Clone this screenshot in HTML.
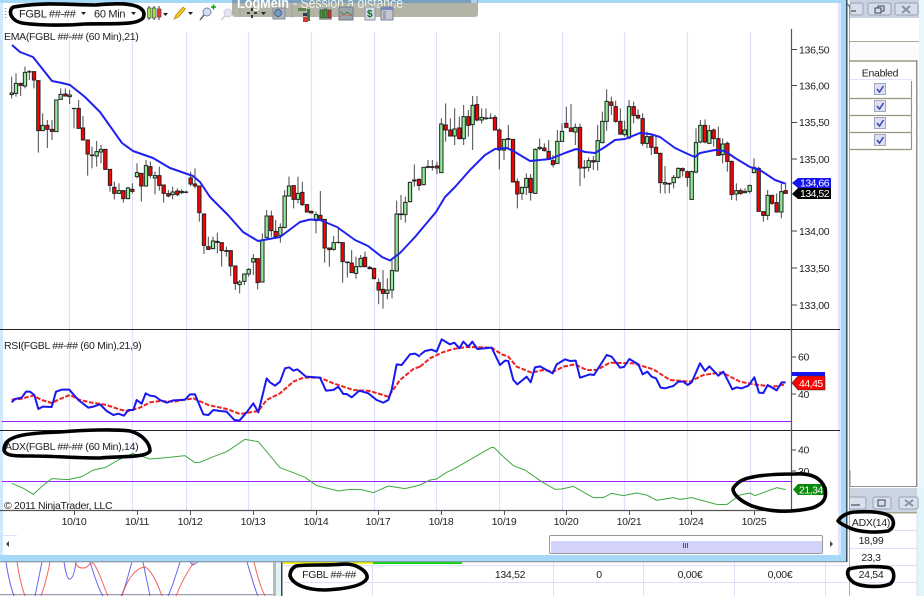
<!DOCTYPE html>
<html><head><meta charset="utf-8"><style>
html,body{margin:0;padding:0;background:#fff}
svg{display:block;filter:blur(.3px)}
text{font-family:"Liberation Sans",sans-serif;font-size:10.5px;letter-spacing:-.3px;fill:#222}
.m{text-anchor:middle}
.w{fill:none;stroke:#2a2a2a;stroke-width:3;opacity:.85}
.r{fill:#f00;stroke:#222;stroke-width:3}
.g{fill:#90ee98;stroke:#222;stroke-width:3}
.el{fill:none;stroke:#000;stroke-width:3.6;stroke-linejoin:round}
.mk{fill:#fff;letter-spacing:-.5px}
</style></head><body>
<svg width="924" height="596" viewBox="0 0 924 596" xmlns="http://www.w3.org/2000/svg">
<rect width="924" height="596" fill="#fff"/>

<!-- right upper window -->
<rect x="846" y="0" width="78" height="18" fill="#c9d3e0"/>
<g fill="#d5deea" stroke="#98a2b2">
<rect x="850" y="3" width="13" height="12" rx="2"/><rect x="868" y="3" width="23" height="12" rx="2"/><rect x="895" y="3" width="23" height="12" rx="2"/>
</g>
<path d="M851 11h5" stroke="#667" stroke-width="1.5"/>
<rect x="878" y="6" width="6" height="5" fill="none" stroke="#445"/><rect x="875" y="8" width="6" height="5" fill="#d5deea" stroke="#445"/>
<path d="M902 6l8 7M910 6l-8 7" stroke="#8a93a5" stroke-width="2"/>
<rect x="919" y="0" width="5" height="490" fill="#e6f8fb"/>
<rect x="848" y="41" width="71" height="1.5" fill="#a9a990"/>
<rect x="848" y="60" width="68" height="2" fill="#b5b5a5"/>
<rect x="848" y="42" width="71" height="18" fill="#fafcfe"/>
<rect x="916" y="60" width="1.5" height="427" fill="#8b8f98"/>
<rect x="850" y="79" width="62" height="1" fill="#dfe4fa"/>
<text class="m" x="880" y="76.500">Enabled</text>
<path d="M850 98.500h61M850 115.500h61M850 132.500h61M850 149.500h61M911.500 81V150" stroke="#97977f" stroke-width="1.200"/>
<g fill="#dde0ee" stroke="#a0a8bc">
<rect x="874.500" y="83.500" width="11" height="11"/><rect x="874.500" y="100.500" width="11" height="11"/><rect x="874.500" y="117.500" width="11" height="11"/><rect x="874.500" y="134.500" width="11" height="11"/>
</g>
<path d="M877 89l2.500 3 4-6M877 106l2.500 3 4-6M877 123l2.500 3 4-6M877 140l2.500 3 4-6" fill="none" stroke="#3345c0" stroke-width="1.500"/>
<path d="M850 486.500h67" stroke="#8b8f98"/>
<path d="M850 470V487" stroke="#8b8f98"/>

<!-- right lower window -->
<rect x="846" y="488" width="73" height="25" fill="#cbd5e2"/>
<rect x="917" y="488" width="7" height="108" fill="#e0f6fa"/>
<g fill="#d7e0ec" stroke="#98a2b2">
<rect x="847" y="497" width="19" height="12" rx="2"/><rect x="873" y="497" width="18" height="12" rx="2"/><rect x="899" y="497" width="19" height="12" rx="2"/>
</g>
<path d="M851 505h9" stroke="#667" stroke-width="1.500"/><rect x="878" y="500" width="7" height="6" fill="none" stroke="#445"/>
<path d="M905 500l8 6M913 500l-8 6" stroke="#8a93a5" stroke-width="2"/>
<rect x="846" y="512" width="71" height="1.500" fill="#a9a990"/>

<!-- bottom background table -->
<g stroke="#dedef8" fill="none">
<path d="M284 565.500H917M284 582.500H917M846 530.500H917M846 548.500H917M372.500 562V596M553.500 562V596M643.500 562V596M734.500 562V596M825.500 562V596M917 513V596"/>
</g>
<rect x="283" y="561" width="90" height="3" fill="#f4f400"/>
<rect x="373" y="561" width="89" height="3" fill="#00e000"/>
<text class="m" x="329" y="578">FGBL ##-##</text>
<text class="m" x="510" y="578">134,52</text>
<text class="m" x="599" y="578">0</text>
<text class="m" x="690" y="578">0,00€</text>
<text class="m" x="780" y="578">0,00€</text>
<text class="m" x="871" y="526">ADX(14)</text>
<text class="m" x="871" y="544">18,99</text>
<text class="m" x="871" y="561">23,3</text>
<text class="m" x="871" y="578">24,54</text>
<!-- bottom-left chart fragment -->
<rect x="0" y="594" width="273" height="1.200" fill="#9a9ab0"/>
<rect x="273" y="561" width="3" height="35" fill="#b5bcbc"/><rect x="276" y="561" width="5" height="35" fill="#dff5f5"/><rect x="281" y="561" width="1.500" height="35" fill="#444"/>
<g fill="none" stroke="#4a4af0" stroke-width="1" opacity=".85">
<path d="M6 562C8 575 11 588 14 596M42 562L35 596M64 562C66 575 68 580 70 579C73 578 75 570 76 562M90 562C94 575 99 590 103 596M132 562C128 575 125 590 121 596M143 562L150 596M180 562C176 575 172 588 168 596M198 562L193 565L190 562M247 562C251 575 255 590 258 596"/>
</g>
<g fill="none" stroke="#f04a4a" stroke-width="1" opacity=".85">
<path d="M17 562C19 575 22 588 25 596M50 562C48 572 44 588 41 596M75 562C78 568 80 568 84 568C88 568 90 562 93 563C98 568 103 585 108 596M122 596C127 580 135 568 145 567C152 570 158 585 162 596M176 596C182 580 190 568 194 562M254 562C257 575 261 588 265 596"/>
</g>

<!-- main window -->
<rect x="0" y="0" width="846" height="562" fill="#a6d8f8"/>
<rect x="2" y="3" width="836" height="552" fill="#fff"/>
<rect x="838" y="3" width="3" height="552" fill="#dfe6fa"/>
<rect x="846" y="0" width="1.500" height="562" fill="#3a4a5a"/>
<rect x="847.500" y="0" width="2" height="596" fill="#fff"/>
<rect x="0" y="561" width="846" height="1.300" fill="#8a9aa8"/>
<path d="M847 4c2 1 3 3 3 5" stroke="#556" fill="none"/>
<path d="M849.500 9V596" stroke="#556" stroke-width=".8" opacity=".6"/>
<rect x="0" y="3" width="3" height="552" fill="#cfe8fb"/>

<!-- grid -->
<path d="M69.500 32V510M132.500 32V510M186.500 32V510M248.500 32V510M311.500 32V510M374.500 32V510M436.500 32V510M499.500 32V510M562.500 32V510M624.500 32V510M687.500 32V510M750.500 32V510" stroke="#dfe0fb" stroke-width="1.200" fill="none"/>

<!-- toolbar -->
<path d="M5.500 8v1M5.500 11v1M5.500 14v1M5.500 17v1" stroke="#999" stroke-width="1.500"/>
<text x="19" y="17.500" style="font-size:11px">FGBL ##-##</text>
<path d="M81 12h5l-2.500 3z" fill="#222"/>
<text x="94" y="17.500" style="font-size:11px">60 Min</text>
<path d="M131 12h5l-2.500 3z" fill="#222"/>
<path d="M149 6V20M154 6V20M159 6V20" stroke="#333"/>
<rect x="147.500" y="8" width="3.500" height="10" fill="#9be34a" stroke="#444" stroke-width=".7"/>
<rect x="152.500" y="8" width="3.500" height="10" fill="#9be34a" stroke="#444" stroke-width=".7"/>
<rect x="157.500" y="9" width="3.500" height="8" fill="#e33" stroke="#444" stroke-width=".7"/>
<path d="M163 13h5l-2.500 3z" fill="#222"/>
<path d="M174 19l2-4 7-8 2.500 2-7 8z" fill="#f0c820" stroke="#a88a10" stroke-width=".7"/>
<path d="M188 12h5l-2.500 3z" fill="#222"/>
<circle cx="207" cy="12" r="4" fill="#cfe0f5" stroke="#7a8aa8"/><path d="M204 15l-4 5" stroke="#667" stroke-width="1.500"/>
<path d="M211 7h5M213.500 4.500v5" stroke="#0a0" stroke-width="1.500"/>
<circle cx="228" cy="13" r="4" fill="#e4e4f6" stroke="#c8c8de"/><path d="M225 16l-4 4" stroke="#ccc" stroke-width="1.500"/>

<!-- LogMeIn overlay -->
<rect x="232" y="0" width="246" height="17" rx="3" fill="#8f917c" opacity=".68"/>
<rect x="232" y="0" width="246" height="3" fill="#6f9fc4" opacity=".8"/>
<text x="237" y="8" textLength="52" lengthAdjust="spacingAndGlyphs" style="font-size:14.500px;letter-spacing:0;fill:#fff;font-weight:bold">LogMeIn</text>
<text x="293" y="8" textLength="110" lengthAdjust="spacingAndGlyphs" style="font-size:14.500px;letter-spacing:0;fill:#eef0e6">- Session à distance</text>
<rect x="471" y="0" width="6" height="3" fill="#b6cbe4"/>
<path d="M240 6V16M292 6V18" stroke="#99a" opacity=".6"/>
<path d="M252 8v3M252 15v3M247 13h3M254 13h3" stroke="#111" stroke-width="1.600"/>
<path d="M261 12h5l-2.500 3z" fill="#222"/>
<rect x="273" y="8" width="12" height="11" fill="#aab6c4" stroke="#889"/><circle cx="278" cy="13" r="3.500" fill="#6d9dc8" stroke="#567"/>
<g transform="translate(298 7)"><rect x="0" y="1" width="8" height="3" fill="#5a8a4a"/><rect x="5" y="6" width="7" height="3" fill="#335"/><rect x="9" y="2" width="3" height="12" fill="#3a7a3a"/><rect x="5" y="10" width="5" height="5" fill="#d33"/></g>
<g transform="translate(319 7)"><rect x="0" y="0" width="13" height="13" fill="#a8aeb0"/><rect x="1" y="3" width="3" height="8" fill="#4a9a3a" stroke="#333" stroke-width=".6"/><rect x="5" y="2" width="3" height="9" fill="#4a9a3a" stroke="#333" stroke-width=".6"/><rect x="9" y="3" width="3" height="8" fill="#c33" stroke="#333" stroke-width=".6"/></g>
<g transform="translate(339 7)"><rect x="0" y="0" width="14" height="13" fill="#9aa4ac" stroke="#778"/><path d="M1 5l4 3 3-3 5 4" stroke="#3a8a3a" fill="none"/><path d="M1 10l4-3 4 2 4-2" stroke="#c66" fill="none" stroke-width=".8"/></g>
<g transform="translate(365 7)"><rect x="0" y="0" width="10" height="13" fill="#d4dce6" stroke="#8892a4"/><text x="2" y="10" style="font-size:10px;fill:#0a6a2a;font-weight:bold;letter-spacing:0">$</text></g>
<g transform="translate(381 7)"><rect x="0" y="0" width="12" height="13" fill="#c4c8cc" stroke="#7a80a0"/><rect x="0" y="0" width="12" height="3" fill="#7a86b8"/><rect x="2" y="4" width="3" height="8" fill="#96a0c8"/></g>

<text x="4" y="40">EMA(FGBL ##-## (60 Min),21)</text>

<!-- panels -->
<path d="M0 329.500H840M0 430.500H840" stroke="#222" stroke-width="1"/>
<path d="M2 421.500H791M2 481.500H791" stroke="#9a20ff" stroke-width="1"/>
<path d="M791.500 29V510M0 510.500H791.500" stroke="#555" stroke-width="1.200" fill="none"/>
<path d="M791 49.500h6M791 85.500h6M791 122.500h6M791 159h6M791 231h6M791 268h6M791 305h6M791 357h5M791 394h5M791 450h5M791 471h5" stroke="#444"/>
<path d="M74.500 510v5M137.500 510v5M190.500 510v5M253.500 510v5M316.500 510v5M378.500 510v5M441.500 510v5M504.500 510v5M566.500 510v5M629.500 510v5M691.500 510v5M754.500 510v5" stroke="#555"/>
<g>
<text x="799" y="53.500">136,50</text><text x="799" y="89.500">136,00</text><text x="799" y="126">135,50</text><text x="799" y="163">135,00</text><text x="799" y="235">134,00</text><text x="799" y="272">133,50</text><text x="799" y="309">133,00</text>
<text x="798" y="360.500">60</text><text x="798" y="398">40</text><text x="798" y="453.500">40</text><text x="798" y="475">30</text>
</g>
<g class="dates">
<text class="m" x="74" y="525">10/10</text><text class="m" x="137" y="525">10/11</text><text class="m" x="190" y="525">10/12</text><text class="m" x="253" y="525">10/13</text><text class="m" x="316" y="525">10/14</text><text class="m" x="378" y="525">10/17</text><text class="m" x="441" y="525">10/18</text><text class="m" x="504" y="525">10/19</text><text class="m" x="566" y="525">10/20</text><text class="m" x="629" y="525">10/21</text><text class="m" x="691" y="525">10/24</text><text class="m" x="754" y="525">10/25</text>
</g>
<text x="4" y="349">RSI(FGBL ##-## (60 Min),21,9)</text>
<text x="5" y="450">ADX(FGBL ##-## (60 Min),14)</text>
<text x="4" y="509">© 2011 NinjaTrader, LLC</text>

<!-- candles 1 -->
<g transform="translate(0 60) scale(.33333)">
<path class="w" d="M35 50V115M48 40V110M62 68V108M75 20V85M88 30V60M102 35V85M115 62V278M128 160V212M142 180V264M156 180V240M169 120V215M182 85V120M196 85V110M209 90V132M222 145V205M236 120V205M249 168V240M263 240V347M276 260V325M290 243V320M303 255V310M316 268V330M330 328V395M343 365V418M357 370V402M370 390V428M384 380V418M397 370V400M411 310V355M424 340V425M438 300V380M451 305V355M465 335V403M478 320V392M491 375V428M505 390V412M518 380V418M532 385V408M545 388V402M558 392V400M572 335V378M585 325V385M598 378V485M612 460V582M625 530V570M639 530V568M652 518V580M665 548V620M679 560V590M692 572V648M706 618V690M719 660V700M733 640V675M746 625V650M760 582V645M773 596V688M787 520V666M800 450V535M814 452V530M827 480V535M841 490V548M854 390V505M867 350V410M881 375V445M894 350V430"/>
<path class="r" d="M57 70h10V76h-10zM97 35h10V60h-10zM110 62h10V212h-10zM137 196h10V208h-10zM151 208h10V214h-10zM191 102h10V108h-10zM231 145h10V205h-10zM244 204h10V240h-10zM258 240h10V282h-10zM311 268h10V328h-10zM325 328h10V376h-10zM338 382h10V400h-10zM365 392h10V416h-10zM392 388h10V394h-10zM419 340h10V378h-10zM446 320h10V346h-10zM473 347h10V376h-10zM486 375h10V400h-10zM500 401h10V408h-10zM527 393h10V404h-10zM567 354h10V372h-10zM580 372h10V378h-10zM593 378h10V458h-10zM607 462h10V556h-10zM620 560h10V568h-10zM647 544h10V547h-10zM660 548h10V572h-10zM687 572h10V618h-10zM701 618h10V670h-10zM768 596h10V668h-10zM809 468h10V512h-10zM822 514h10V530h-10zM876 377h10V418h-10z"/>
<path class="g" d="M30 99h10V104h-10zM43 70h10V100h-10zM70 37h10V78h-10zM83 35h10V36h-10zM123 196h10V212h-10zM164 120h10V215h-10zM177 103h10V118h-10zM204 105h10V110h-10zM217 145h10V146h-10zM271 285h10V287h-10zM285 275h10V288h-10zM298 268h10V276h-10zM352 392h10V400h-10zM379 384h10V416h-10zM406 338h10V350h-10zM433 317h10V378h-10zM460 347h10V354h-10zM513 396h10V404h-10zM540 394h10V398h-10zM553 396h10V397h-10zM634 543h10V566h-10zM674 572h10V574h-10zM714 666h10V674h-10zM728 642h10V664h-10zM741 628h10V642h-10zM755 596h10V606h-10zM782 540h10V666h-10zM795 468h10V532h-10zM836 502h10V526h-10zM849 408h10V502h-10zM862 378h10V408h-10zM889 400h10V418h-10z"/>
</g>
<!-- candles 2 -->
<g transform="translate(300 80) scale(.33333)">
<path class="w" d="M7 305V378M21 372V398M34 392V400M48 395V460M61 333V420M74 418V548M88 505V560M101 468V512M115 445V490M128 487V608M142 545V592M155 510V578M168 530V596M182 525V562M195 515V562M209 558V568M222 565V598M236 595V672M249 570V686M262 595V658M276 535V655M290 362V575M303 345V420M316 350V428M330 305V368M343 253V320M357 295V332M371 262V316M384 240V265M397 240V272M411 245V282M424 115V278M437 70V185M451 115V170M464 85V195M478 110V178M491 75V195M505 90V170M518 48V210M531 48V125M545 85V130M558 85V120M572 100V116M585 105V150M598 145V268M612 178V240M625 135V210M639 178V308M652 295V385M666 320V360M679 280V345M692 282V362M706 205V342M719 175V210M733 190V215M746 180V240"/>
<path class="r" d="M2 337h10V374h-10zM16 374h10V396h-10zM29 394h10V399h-10zM56 406h10V418h-10zM69 418h10V504h-10zM83 504h10V509h-10zM123 488h10V545h-10zM150 549h10V578h-10zM190 532h10V560h-10zM204 562h10V566h-10zM217 565h10V596h-10zM231 608h10V630h-10zM244 628h10V640h-10zM352 298h10V316h-10zM406 258h10V264h-10zM432 135h10V150h-10zM446 150h10V168h-10zM473 144h10V176h-10zM500 110h10V136h-10zM526 74h10V120h-10zM580 112h10V150h-10zM593 150h10V210h-10zM634 178h10V306h-10zM647 305h10V342h-10zM687 295h10V338h-10zM728 204h10V212h-10zM741 214h10V238h-10z"/>
<path class="g" d="M43 404h10V422h-10zM96 488h10V508h-10zM110 487h10V488h-10zM137 546h10V548h-10zM163 560h10V580h-10zM177 535h10V560h-10zM257 630h10V640h-10zM271 572h10V630h-10zM285 402h10V573h-10zM298 402h10V404h-10zM311 367h10V404h-10zM325 307h10V365h-10zM338 300h10V303h-10zM366 262h10V314h-10zM379 260h10V262h-10zM392 260h10V262h-10zM419 132h10V278h-10zM459 147h10V168h-10zM486 110h10V176h-10zM513 76h10V134h-10zM540 112h10V120h-10zM553 114h10V116h-10zM567 114h10V115h-10zM607 178h10V210h-10zM620 176h10V178h-10zM661 322h10V340h-10zM674 295h10V322h-10zM701 208h10V340h-10zM714 202h10V206h-10z"/>
</g>
<!-- candles 3 -->
<g transform="translate(550 80) scale(.33333)">
<path class="w" d="M9 225V262M22 150V250M36 130V184M49 80V145M63 72V155M76 130V195M90 130V318M103 240V295M116 232V275M130 228V270M143 135V272M157 95V190M170 28V152M184 50V105M197 62V128M211 85V165M224 122V170M237 60V178M251 65V130M264 88V118M278 100V198M291 155V205M304 165V225M318 170V220M331 218V340M345 258V340M358 308V340M371 285V325M385 262V296M398 262V290M412 272V320M425 272V360M438 145V280M451 120V190M465 118V190M478 135V192M491 145V200M505 140V225M518 175V250M532 185V275M545 242V360M559 310V362M572 325V345M585 325V340M599 315V340M612 235V280M626 260V395M640 395V425M653 330V420M666 345V375M680 340V398M694 310V415M707 308V340"/>
<path class="r" d="M4 242h10V254h-10zM44 130h10V142h-10zM58 144h10V154h-10zM85 142h10V264h-10zM125 242h10V246h-10zM179 66h10V76h-10zM192 80h10V124h-10zM206 124h10V162h-10zM246 80h10V106h-10zM259 106h10V114h-10zM273 116h10V190h-10zM299 170h10V202h-10zM313 202h10V220h-10zM326 220h10V308h-10zM393 266h10V272h-10zM407 275h10V292h-10zM460 136h10V186h-10zM486 150h10V176h-10zM500 176h10V226h-10zM527 190h10V244h-10zM540 244h10V344h-10zM567 332h10V340h-10zM621 265h10V394h-10zM635 395h10V406h-10zM661 346h10V370h-10zM675 368h10V396h-10zM702 332h10V340h-10z"/>
<path class="g" d="M17 184h10V250h-10zM31 154h10V184h-10zM71 142h10V156h-10zM98 262h10V264h-10zM111 242h10V262h-10zM138 182h10V244h-10zM152 124h10V188h-10zM165 64h10V124h-10zM219 150h10V164h-10zM232 80h10V174h-10zM286 170h10V190h-10zM340 308h10V312h-10zM353 310h10V312h-10zM366 292h10V308h-10zM380 265h10V292h-10zM420 275h10V358h-10zM433 188h10V276h-10zM446 136h10V186h-10zM473 152h10V190h-10zM513 192h10V224h-10zM554 332h10V342h-10zM580 334h10V338h-10zM594 316h10V334h-10zM607 262h10V278h-10zM648 346h10V406h-10zM689 335h10V396h-10z"/>
</g>

<!-- EMA -->
<path fill="none" stroke="#2020f0" stroke-width="2" stroke-linejoin="round" d="M12 45L20 52L33 57L52 81L62 83L70 85L85 97L100 112L122 143L133 151L153 158L170 168L193 176L200 182L210 197L228 215L243 232L258 241L280 237L300 222L310 219.500L320 220L337 227L355 240L368 246L382 257L390 260.500L400 253L415 237L436 212L445 197L455 187L470 170L485 155L495 149L507 148L515 152L530 161L540 160L550 159L565 153L576 149L585 152L595 153L605 147L615 140L625 139L640 133L650 134L660 137L675 148L690 155L695 157L700 153L715 150L725 151L735 158L750 167L760 170L775 180L785 183.500"/>

<!-- RSI -->
<g transform="translate(0 325) scale(.33333)" fill="none" stroke-linejoin="round">
<path stroke="#f02020" stroke-width="6" stroke-dasharray="14 5" d="M35 224L60 222L100 212L125 225L155 234L180 222L210 210L240 225L270 232L320 240L360 254L385 258L420 248L450 232L480 228L520 230L580 220L625 240L680 252L720 267L775 258L800 225L840 205L880 170L910 158L960 158L1000 175L1060 195L1110 198L1165 215L1200 165L1240 132L1260 125"/>
<path stroke="#1818f0" stroke-width="6" d="M35 232L45 222L65 218L78 200L90 200L103 210L115 252L128 245L155 246L168 200L185 194L208 194L235 225L265 248L280 245L300 238L320 258L340 270L355 266L372 272L385 255L400 255L410 225L425 236L437 205L450 212L465 214L480 225L500 233L520 226L540 225L555 224L570 208L585 208L610 268L625 270L640 255L660 258L680 260L703 285L718 287L740 262L760 235L775 262L800 160L810 172L825 182L840 170L855 130L868 127L880 137L892 133L918 155L960 158L978 197L1000 195L1015 185L1030 207L1040 207L1055 217L1078 197L1105 205L1130 225L1150 233L1165 225L1175 195L1190 118L1205 120L1230 88L1245 86L1260 95"/>
<path stroke="#3fa83f" stroke-width="3" d="M35 475L70 490L100 508L125 485L155 461L205 464L245 455L280 435L315 428L355 405L398 385L450 402L500 398L555 392L585 413L600 412L640 395L680 380L735 343L775 350L840 428L885 445L915 457L950 482L1015 498L1050 493L1085 494L1120 503L1165 483L1215 491L1260 480"/>
</g>
<g transform="translate(420 325) scale(.33333)" fill="none" stroke-linejoin="round">
<path stroke="#f02020" stroke-width="6" stroke-dasharray="14 5" d="M0 125L30 100L65 83L100 72L140 66L215 68L245 88L265 95L290 125L335 143L370 135L400 140L430 125L465 118L500 135L530 135L570 113L640 115L700 133L750 165L810 170L850 150L905 142L960 170L1000 178L1060 185L1097 178"/>
<path stroke="#1818f0" stroke-width="6" d="M0 90L15 78L35 74L50 80L65 43L90 58L103 53L118 70L130 50L145 65L157 50L172 72L215 68L240 120L255 107L265 108L280 165L292 178L320 155L332 172L345 127L360 124L398 145L410 118L435 103L450 108L467 107L480 158L510 148L522 150L560 90L575 95L600 128L612 126L628 102L655 118L668 148L682 140L695 155L708 160L722 188L735 190L760 183L775 170L790 170L803 180L815 172L840 115L855 138L868 124L895 152L910 140L937 193L950 187L965 190L985 182L1003 157L1017 203L1030 204L1043 180L1070 196L1085 172L1097 172"/>
<path stroke="#3fa83f" stroke-width="3" d="M0 480L30 465L50 462L80 442L105 430L215 367L222 368L250 395L280 422L315 435L365 470L405 493L425 492L460 484L520 518L550 518L575 505L610 512L650 504L680 510L710 526L760 518L780 523L815 518L890 538L920 539L960 510L990 504L1005 512L1070 488L1097 494"/>
</g>

<!-- markers -->
<path d="M792 183l6-5h33v10h-33z" fill="#1414f0"/>
<text class="mk" x="800" y="186.500">134,66</text>
<path d="M792 194l6-6h33v11h-33z" fill="#000"/>
<text class="mk" x="800" y="197">134,52</text>
<path d="M792 376v-4h33v4z" fill="#1414f0"/>
<path d="M792 383l6-7h27v14h-27z" fill="#f00" stroke="#333" stroke-width=".6"/>
<text class="mk" x="799" y="387">44,45</text>
<path d="M793 489.500l5-5.500h27v11h-27z" fill="#0a8a0a"/>
<text class="mk" x="799" y="493.500">21,34</text>

<!-- scrollbar -->
<rect x="2" y="535" width="15" height="1" fill="#e0e0fa"/>
<path d="M9 541v6l-3-3z" fill="#444"/>
<rect x="549.500" y="535.500" width="273" height="18" rx="1.500" fill="#fff" stroke="#999"/>
<rect x="551" y="541" width="271" height="12" fill="#d2d2fa"/>
<path d="M683.500 543v5M685.500 543v5M687.500 543v5" stroke="#555"/>
<path d="M830 541v6l3-3z" fill="#444"/>

<!-- hand-drawn ellipses -->
<path class="el" d="M20 6C50 2 70 5 95 5C110 4 122 3 132 5C142 7 146 12 143 18C136 26 110 23 85 24C60 26 35 25 22 23C12 21 8 13 12 8C14 6 16 7 20 6Z"/>
<path class="el" d="M6 443C12 435 30 433 60 432C85 430 115 429 130 431C142 434 150 443 150 451C146 458 120 456 100 458C75 458 55 456 30 456C15 456 5 456 4 450C4 446 5 445 6 443Z"/>
<path class="el" d="M738 483C745 476 770 474 795 474C808 473 820 476 825 488C827 498 824 504 812 508C790 513 770 512 752 506C740 501 733 494 733 489C734 486 736 485 738 483Z"/>
<path class="el" d="M296 566C310 564 325 566 345 564C358 564 368 572 367 578C364 586 345 589 325 590C305 590 293 584 290 576C290 571 292 568 296 566Z"/>
<path class="el" d="M838 521C841 516 848 512 856 512C870 511 885 512 891 517C895 522 894 528 888 531C875 533 858 532 850 528C845 526 841 524 838 521Z"/>
<path class="el" d="M849 569C860 566 880 566 890 568C895 571 895 580 890 584C880 588 860 587 853 582C848 578 846 573 849 569Z"/>
</svg>
</body></html>
